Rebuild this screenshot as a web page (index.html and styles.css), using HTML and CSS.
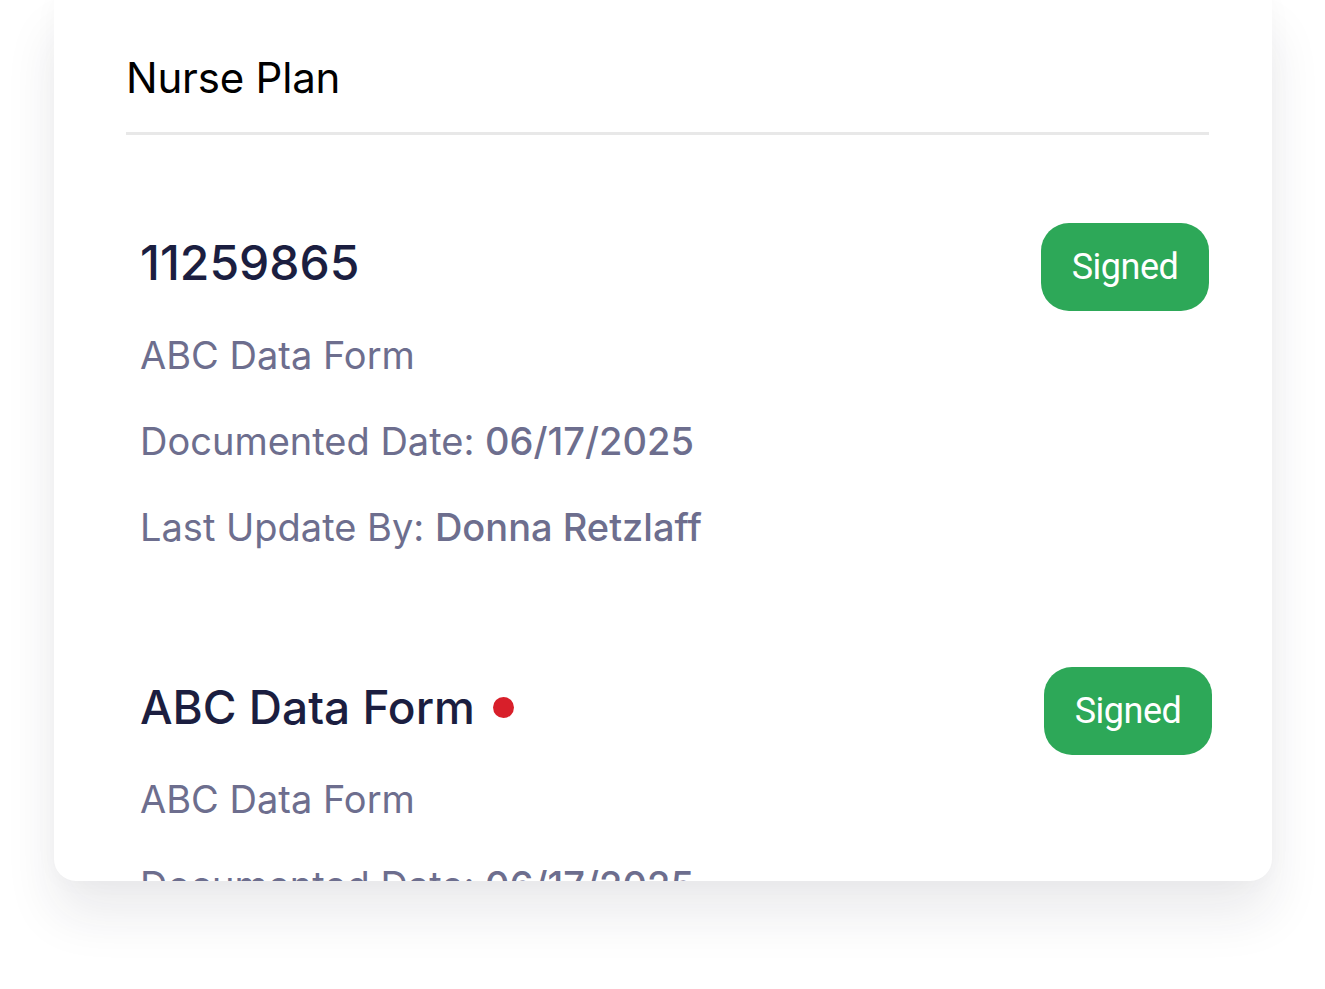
FILE: index.html
```html
<!DOCTYPE html>
<html lang="en">
<head>
<meta charset="utf-8">
<title>Nurse Plan</title>
<link rel="stylesheet" href="styles.css">
</head>
<body>
<div class="page">
  <section class="card">
    <header class="card-header">
      <h1 class="card-title">Nurse Plan</h1>
    </header>
    <div class="list">
      <article class="item">
        <div class="item-top">
          <h2 class="item-title item-number">11259865</h2>
          <span class="badge">Signed</span>
        </div>
        <p class="line">ABC Data Form</p>
        <p class="line">Documented Date: <strong>06/17/2025</strong></p>
        <p class="line">Last Update By: <strong>Donna Retzlaff</strong></p>
      </article>
      <article class="item item-second">
        <div class="item-top">
          <h2 class="item-title">ABC Data Form <span class="dot"></span></h2>
          <span class="badge">Signed</span>
        </div>
        <p class="line">ABC Data Form</p>
        <p class="line">Documented Date: <strong>06/17/2025</strong></p>
        <p class="line">Last Update By: <strong>Donna Retzlaff</strong></p>
      </article>
    </div>
  </section>
</div>
</body>
</html>
```

FILE: styles.css
```css
html, body {
  margin: 0;
  padding: 0;
  background: #ffffff;
}

.page {
  width: 1325px;
  height: 989px;
  padding: 0 53px 0 54px;
  box-sizing: border-box;
  overflow: hidden;
}

.card {
  background: #ffffff;
  height: 881px;
  border-radius: 0 0 22px 22px;
  box-shadow: 0 34px 52px rgba(30, 35, 60, 0.09), 0 0 24px rgba(30, 35, 60, 0.03);
  padding: 0 63px 0 72px;
  box-sizing: border-box;
  overflow: hidden;
}

.card-header {
  padding-top: 54px;
  border-bottom: 3px solid #e8e8e8;
  height: 135px;
  box-sizing: border-box;
}

.card-title {
  margin: 0;
  font-family: Inter, "Liberation Sans", sans-serif;
  font-weight: 400;
  font-size: 42px;
  line-height: 48px;
  color: #000000;
  letter-spacing: -0.2px;
}

.list {
  padding-left: 14px;
  padding-top: 88px;
}

.item-top {
  display: flex;
  justify-content: space-between;
  align-items: flex-start;
  height: 89px;
}

.item-title {
  margin: 0;
  padding-top: 12px;
  font-family: Inter, "Liberation Sans", sans-serif;
  font-weight: 500;
  font-size: 46px;
  line-height: 56px;
  color: #1b1e40;
  display: flex;
  align-items: center;
  gap: 18px;
}

.item-number {
  font-size: 48px;
  font-weight: 450;
}

.dot {
  width: 21px;
  height: 21px;
  border-radius: 50%;
  background: #d81f2a;
  display: inline-block;
}

.badge {
  display: inline-flex;
  align-items: center;
  justify-content: center;
  width: 168px;
  height: 88px;
  border-radius: 28px;
  background: #2da858;
  color: #ffffff;
  font-family: Roboto, "Liberation Sans", sans-serif;
  font-size: 36px;
  letter-spacing: -0.5px;
}

.line {
  margin: 0;
  font-family: Inter, "Liberation Sans", sans-serif;
  font-size: 38px;
  line-height: 86px;
  color: #6d6e8e;
  letter-spacing: 0;
}

.line strong {
  font-weight: 500;
}

.item-second {
  margin-top: 97px;
}

.item-second .badge {
  margin-right: -3px;
}
```
